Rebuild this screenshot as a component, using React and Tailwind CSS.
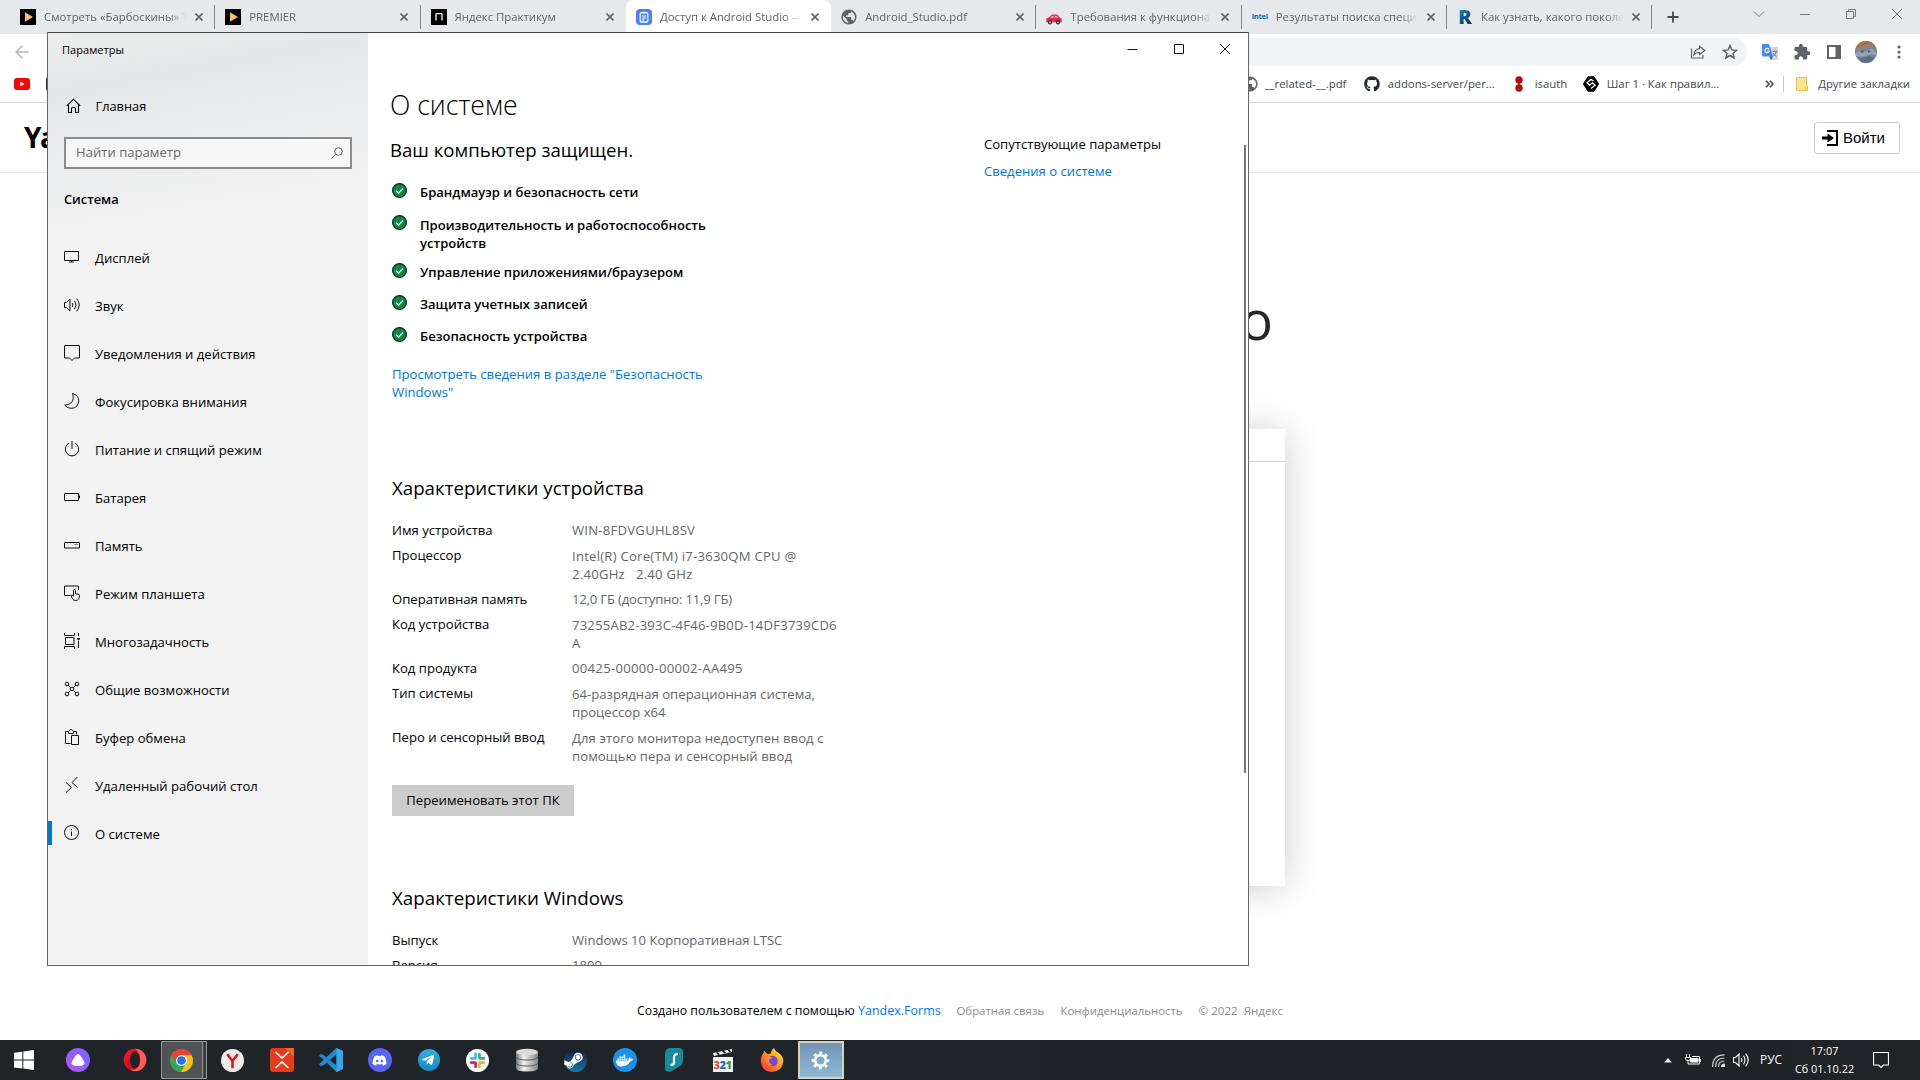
import React from "react";
import { FaDiscord, FaDocker, FaGithub, FaSteamSymbol, FaTelegramPlane } from "react-icons/fa";
import { MdPublic, MdExtension } from "react-icons/md";

/* ---------- Tab favicons ---------- */
const PlayFav = () => (
  <svg viewBox="0 0 16 16" className="size-4 shrink-0">
    <rect width="16" height="16" fill="#000" />
    <path d="M5 3.2 13 8 5 12.8Z" fill="#fbc056" />
  </svg>
);
const PracticumFav = () => (
  <svg viewBox="0 0 16 16" className="size-4 shrink-0">
    <rect width="16" height="16" fill="#000" />
    <path d="M5 11.5V5.5Q5 4.7 5.8 4.7H10.3Q11 4.7 11 5.5V11.5" fill="none" stroke="#fff" strokeWidth="1.3" />
  </svg>
);
const FormFav = () => (
  <svg viewBox="0 0 16 16" className="size-4 shrink-0">
    <rect width="16" height="16" rx="4" fill="#4c7dfb" />
    <rect x="4.2" y="3.8" width="7.6" height="9.2" rx="1" fill="none" stroke="#fff" strokeWidth="1.3" />
    <path d="M6 3.3h4M6 7h4M6 9h4M6 11h2.6" stroke="#fff" strokeWidth="1" />
  </svg>
);
const CarFav = () => (
  <svg viewBox="0 0 16 16" className="size-4 shrink-0">
    <path d="M.3 13.3V10.2Q.5 9 2.800 8.600L5 6.200Q5.600 5.600 6.500 5.600H10.600Q11.600 5.600 12.200 6.400L13.600 8.600Q15.700 9 15.700 10.600V13.300Z" fill="#dd2e44" />
    <path d="M4.200 8.800 5.800 7Q6 6.800 6.400 6.800H7.800V8.800ZM8.800 6.800H10.400Q11 6.800 11.300 7.300L12.100 8.800H8.800Z" fill="#f3a0ab" />
    <circle cx="4" cy="13.400" r="2.100" fill="#292f33" />
    <circle cx="12" cy="13.400" r="2.100" fill="#292f33" />
    <circle cx="4" cy="13.400" r=".9" fill="#ccd6dd" />
    <circle cx="12" cy="13.400" r=".9" fill="#ccd6dd" />
  </svg>
);
const IntelFav = () => (
  <span className="flex w-4 shrink-0 justify-center text-[7.5px] font-bold tracking-[-0.2px] text-[#0068b5]">intel</span>
);
const RFav = () => (
  <span className="flex w-4 shrink-0 justify-center bg-gradient-to-br from-[#0b93c4] to-[#0d1f50] bg-clip-text text-[20px] leading-4 font-extrabold text-transparent">R</span>
);
const GlobeFav = () => <MdPublic className="size-[18px] shrink-0 -mx-px text-[#5f6368]" />;

const TABS = [
  { title: "Смотреть «Барбоскины» Т", Fav: PlayFav, sep: true },
  { title: "PREMIER", Fav: PlayFav, sep: true },
  { title: "Яндекс Практикум", Fav: PracticumFav },
  { title: "Доступ к Android Studio —", Fav: FormFav, active: true },
  { title: "Android_Studio.pdf", Fav: GlobeFav, sep: true },
  { title: "Требования к функциона", Fav: CarFav, sep: true },
  { title: "Результаты поиска специ", Fav: IntelFav, sep: true },
  { title: "Как узнать, какого поколе", Fav: RFav, sep: true },
];

function Tab({ title, Fav, active, sep }) {
  return (
    <div className={"flex h-[34px] w-[205.3px] items-center pr-[10px] pl-[10px] " + (active ? "rounded-t-lg bg-white" : "")}>
      <Fav />
      <div className="ml-2 w-[145px] overflow-hidden whitespace-nowrap [mask-image:linear-gradient(to_right,#000_86%,transparent_98%)]">{title}</div>
      <svg viewBox="0 0 8 8" className="ml-[6px] size-2 shrink-0">
        <path d="M.5.5l7 7M7.5.5l-7 7" stroke="#5f6368" strokeWidth="1.6" />
      </svg>
      <div className={"ml-auto -mr-[10px] h-6 w-px " + (sep ? "bg-[#85888d]" : "")} />
    </div>
  );
}

function BrowserChrome() {
  return (
    <div className="text-[11.35px] text-[#5f6368]">
      <div className="flex h-[34px] items-center bg-[#e7e8ec] pl-[10px]">
        {TABS.map((t) => (
          <Tab key={t.title} {...t} />
        ))}
        <svg viewBox="0 0 12 12" className="ml-[15px] size-3">
          <path d="M6 0.5v11M.5 6h11" stroke="#45484c" strokeWidth="1.8" />
        </svg>
        <svg viewBox="0 0 150 12" className="mr-[17px] mb-[6px] ml-auto h-3 w-[150px]" fill="none" stroke="#77797d">
          <path d="M1 3.5 6 8.500 11 3.500M47 6.500h10M93.500 3.500h7v7h-7zM95.500 3.500v-2h7v7h-2M139 1l10 10M149 1l-10 10" />
        </svg>
      </div>
      <div className="flex h-9 items-center pr-[19px] pl-[15px]">
        <svg viewBox="0 0 14 14" className="size-[14px]" fill="none" stroke="#babcbe" strokeWidth="1.7">
          <path d="M14 7H1.500M7.500 .7 1.200 7l6.300 6.300" />
        </svg>
        <div className="ml-24 flex h-7 flex-1 items-center justify-end gap-[16px] rounded-full bg-[#f1f3f4] pr-[9px]">
          <svg viewBox="0 0 16 16" className="size-4" fill="none" stroke="#5f6368" strokeWidth="1.200">
            <path d="M1.500 4.500v9.500h11.500v-3M9.500 2.200 14.800 6.500 9.500 10.500V8.300Q6 8.200 3.800 11 4.500 5.200 9.500 4.700Z" />
          </svg>
          <svg viewBox="0 0 16 16" className="size-4" fill="none" stroke="#5f6368" strokeWidth="1.500">
            <path d="M8 1.600 9.900 5.900 14.500 6.300 11 9.400 12.100 14 8 11.500 3.900 14 5 9.400 1.500 6.300 6.100 5.900Z" />
          </svg>
        </div>
        <svg viewBox="0 0 16 16" className="ml-[15px] size-4">
          <path d="M5 3h11v13H9Z" fill="#d3d5d8" />
          <path d="M0 1q0-1 1-1h6l4 12.500H1q-1 0-1-1Z" fill="#4688f4" />
          <path d="M7 12.500h4L9 16Z" fill="#2a56c6" />
          <path d="M7 5.200A2.200 2.200 0 1 0 7.300 7H5.300" fill="none" stroke="#fff" strokeWidth="1.100" />
          <path d="M10.500 7.500h4.500M12.700 6.500v1M14.300 7.600q-.8 3-3 4.600M11.200 9q1 2.400 3.300 3.600" fill="none" stroke="#607d8b" strokeWidth=".9" />
        </svg>
        <MdExtension className="ml-[15px] size-[18px] text-[#5f6368]" />
        <svg viewBox="0 0 14 14" className="ml-[16px] size-[14px]">
          <path d="M1 1h12v12H1z" fill="#fff" stroke="#5f6368" strokeWidth="2" />
          <path d="M8.500 1H13v12H8.500z" fill="#5f6368" />
        </svg>
        <svg viewBox="0 0 22 22" className="ml-[14px] size-[22px] rounded-full">
          <rect width="22" height="22" fill="#7787a0" />
          <path d="M0 0h22v8Q17 3 12 4 5 5 0 9Z" fill="#a9713f" />
          <path d="M5 5 8 4l3 2 5-3 3 3-2 4-8 1-5-2Z" fill="#85878f" />
          <path d="M1 12q4-4 7-2t6-1 8 4v2q-6-3-9-1t-12 1Z" fill="#97a3b5" />
          <path d="M5 10q2-2 4 0l-1 2H6zM13 9q2 0 3 2l-3 1z" fill="#59637a" />
          <path d="M3 16q4 2 8 0t9 1l-6 5H7Z" fill="#5d6a83" />
        </svg>
        <svg viewBox="0 0 4 16" className="ml-[20px] h-4 w-1" fill="#5f6368">
          <circle cx="2" cy="3" r="1.600" /><circle cx="2" cy="8" r="1.600" /><circle cx="2" cy="13" r="1.600" />
        </svg>
      </div>
      <div className="flex h-[33px] items-center border-b border-[#d5d7da] pr-[10px] pb-[4px] pl-[14px] whitespace-nowrap text-[#45484c]">
        <svg viewBox="0 0 16 12" className="h-3 w-4">
          <rect width="16" height="12" rx="3" fill="#f00" />
          <path d="M6.300 3.500 10.500 6 6.300 8.500Z" fill="#fff" />
        </svg>
        <div className="ml-4 size-4 rounded bg-[#2b303b]" />
        <div className="ml-auto flex items-center">
          <MdPublic className="size-[18px] text-[#5f6368]" />
          <span className="ml-[6px] w-[99px]">__related-__.pdf</span>
          <FaGithub className="size-4 text-[#24292f]" />
          <span className="ml-2 w-[127px]">addons-server/per...</span>
          <svg viewBox="0 0 8 16" className="h-4 w-2" fill="#b80c0c">
            <circle cx="4" cy="4" r="3.700" /><circle cx="4" cy="12" r="3.700" /><path d="M3.300 4h1.400v8H3.300z" />
          </svg>
          <span className="ml-3 w-12">isauth</span>
          <svg viewBox="0 0 16 16" className="size-4">
            <path d="M5 .8h6L15.600 8 11 15.200H5L.4 8Z" fill="#000" stroke="#000" strokeLinejoin="round" />
            <path d="M8 12.600 12 9.200 9.500 6.800 6.500 9.200 4 6.800 8 3.400 10.500 5" fill="none" stroke="#fff" strokeWidth="1.300" />
          </svg>
          <span className="ml-2 w-[158.500px]">Шаг 1 · Как правил...</span>
          <svg viewBox="0 0 9 8" className="h-2 w-[9px]" fill="none" stroke="#45484c" strokeWidth="1.600">
            <path d="M1 .7 4 4 1 7.300M5 .7 8 4 5 7.300" />
          </svg>
          <div className="ml-[9px] h-4 w-px bg-[#c5c7ca]" />
          <svg viewBox="0 0 12 14" className="ml-3 h-[14px] w-3">
            <path d="M.5.5h10V9.500h1v4H.5z" fill="#ffe592" stroke="#eac343" />
            <path d="M9.500 13.500v-3l1-1" fill="none" stroke="#eac343" />
          </svg>
          <span className="ml-[10px]">Другие закладки</span>
        </div>
      </div>
    </div>
  );
}

function FormPage() {
  return (
    <div className="flex h-[937px] flex-col">
      <div className="flex h-[70px] items-center justify-between border-b border-[#ebebeb] pr-5 pl-6">
        <span className="pb-[2px] text-[28px] font-bold tracking-[-1.500px] text-black">Ya</span>
        <div className="flex h-8 w-[86px] items-center rounded-[3px] border border-[#ccc] pl-[7px]">
          <svg viewBox="0 0 16 16" className="size-4">
            <path d="M5 1h10v14H5" fill="none" stroke="#000" strokeWidth="2" />
            <path d="M0 6.500h5.500V3.500L12 8l-6.500 4.500V9.500H0Z" fill="#000" />
          </svg>
          <span className="ml-[5px] pt-px font-['Liberation_Sans',Arial,sans-serif] text-[15px] text-black">Войти</span>
        </div>
      </div>
      <div className="flex h-[256px] w-[1273px] justify-end pt-[111px] text-[54px] leading-[70px] text-[#262626]">о</div>
      <div className="ml-[635px] h-[457px] w-[650px] bg-white shadow-[0_2px_36px_rgba(0,0,0,0.2)]">
        <div className="h-[33px] border-b border-[#d0d0d0]" />
      </div>
      <div className="mt-[115px] ml-[637px] flex items-baseline text-[11.4px] leading-5 whitespace-nowrap text-[#8c8c8c]">
        <span className="w-[221px] text-[12.300px] text-black">Создано пользователем с помощью</span>
        <span className="w-[98.500px] text-[12.500px] text-[#07f]">Yandex.Forms</span>
        <span className="w-[104px]">Обратная связь</span>
        <span className="w-[138px]">Конфиденциальность</span>
        <span className="text-[11.600px] whitespace-pre">© 2022  Яндекс</span>
      </div>
    </div>
  );
}

/* ---------- Settings window ---------- */
const NAV = [
  ["Дисплей", <path d="M.5 2.500h14v9h-14zM7.500 11.500v1.500M5 13h5" />],
  ["Звук", <path d="M.5 5.500h2l3.500-3.500v12L2.500 10.500h-2zM8.200 6q1.400 2 0 4M10.500 3.800q3 4.200 0 8.400M12.700 1.600q5 6.400 0 12.800" />],
  ["Уведомления и действия", <path d="M.5.5h15v12.500h-5L8 15.500 5.500 13h-5z" />],
  ["Фокусировка внимания", <path d="M8.500.5Q15 2.500 14.800 8 14.200 14.800 7.500 15.400 3 15.300.7 12.200 8.500 11.500 9.200 5.500 9.500 2.800 8.500.5Z" />],
  ["Питание и спящий режим", <path d="M5 2.200A6.700 6.700 0 1 0 11 2.200M8 0v8" />],
  ["Батарея", <path d="M.5 4.500h14v7h-14zM15.500 6.500v3" />],
  ["Память", <path d="M1 5.500h14q.5 0 .5.500v5h-15V6q0-.5.500-.5zM10.500 7.500h1M12.500 7.500h1" />],
  ["Режим планшета", <path d="M6.500 10.500h-6v-9.500h14v4M9.500 11V5.500q0-1 1-1t1 1V9h2.500q1.500.3 1.500 1.800 0 4.700-3.800 4.700-2.200 0-3.500-2L7 10.500q1-1 2.500.5" />],
  ["Многозадачность", <path d="M.5 0v2.500h10V0M.5 16v-2.500h10V16M1.500 4.500h8.500v7H1.500zM14.500 0v3M14.500 7.500V15M13 5.500h3M13.500 6.500h2" />],
  ["Общие возможности", <path d="M4.300 4.300 6.500 6.500M9.500 6.500l2.200-2.200M4.300 11.700 6.500 9.500M9.500 9.500l2.200 2.200M3 1.200a1.800 1.800 0 1 1 0 3.600 1.800 1.800 0 0 1 0-3.600M13 1.200a1.800 1.800 0 1 1 0 3.600 1.800 1.800 0 0 1 0-3.600M3 11.200a1.800 1.800 0 1 1 0 3.600 1.800 1.800 0 0 1 0-3.600M13 11.200a1.800 1.800 0 1 1 0 3.600 1.800 1.800 0 0 1 0-3.600M8 6.200a1.800 1.800 0 1 1 0 3.600 1.800 1.800 0 0 1 0-3.600" />],
  ["Буфер обмена", <path d="M6.500 14.500h-5v-12h3v2h5v-2h3v3M4.500 2.500q0-1 1-1 .3-1 1.500-1t1.500 1q1 0 1 1M7.500 6.500h7v9h-7z" />],
  ["Удаленный рабочий стол", <path d="M2 5.500 7.500 10.500 2 15.500M13.500 0 8 5.500 13.500 10.500" />],
  ["О системе", <path d="M7.500.5a7 7 0 1 1 0 14 7 7 0 0 1 0-14M7.500 6.500v4.500M7.500 4v1.200" />],
];

function Sidebar() {
  return (
    <div className="flex w-[320px] shrink-0 flex-col bg-[#f2f2f2] bg-[linear-gradient(170deg,#ebecec_0px,#e6e7e8_60px,#ecedee_130px,#f2f2f2_220px)]">
      <div className="pt-2 pl-[14px] text-[11.100px] leading-[18px]">Параметры</div>
      <div className="mt-[38px] flex h-[18px] items-center pl-[18px]">
        <svg viewBox="0 0 16 16" className="size-4" fill="none" stroke="#000" strokeWidth="1.100">
          <path d="M.8 7.800 7.500 1.200 14.200 7.800M2.500 6.500v8h3v-4q0-1 1-1h2q1 0 1 1v4h3v-8" />
        </svg>
        <span className="ml-[13.500px] pt-[2px] text-[12.800px]">Главная</span>
      </div>
      <div className="mt-[22px] ml-4 flex h-8 w-72 items-center justify-between border-2 border-[#8c8c8c] bg-[#f6f6f6] pr-[7px] pl-[10px] text-[#6a6a6a]">
        <span className="pb-px">Найти параметр</span>
        <svg viewBox="0 0 12 12" className="size-3" fill="none" stroke="#666" strokeWidth="1">
          <circle cx="7.500" cy="4.500" r="3.800" /><path d="M4.800 7.200.5 11.500" />
        </svg>
      </div>
      <div className="mt-[21px] ml-4 text-[12.800px] leading-[18px] font-semibold">Система</div>
      <div className="mt-[25px] flex flex-col">
        {NAV.map(([label, icon], i) => (
          <div key={label} className="flex h-12 items-center">
            <div className={"h-6 w-1 " + (i === 12 ? "bg-[#0078d7]" : "")} />
            <svg viewBox="0 0 16 16" className="ml-3 size-4" fill="none" stroke="#111" strokeWidth="1">
              {icon}
            </svg>
            <span className="ml-[15px] pt-px leading-[18px]">{label}</span>
          </div>
        ))}
      </div>
    </div>
  );
}

const CHECKS = [
  ["Брандмауэр и безопасность сети"],
  ["Производительность и работоспособность", "устройств"],
  ["Управление приложениями/браузером"],
  ["Защита учетных записей"],
  ["Безопасность устройства"],
];
const SPECS = [
  ["Имя устройства", ["WIN-8FDVGUHL8SV"], "tracking-[0.25px]"],
  ["Процессор", ["Intel(R) Core(TM) i7-3630QM CPU @", "2.40GHz   2.40 GHz"], "tracking-[0.25px]"],
  ["Оперативная память", ["12,0 ГБ (доступно: 11,9 ГБ)"], "tracking-[-0.18px]"],
  ["Код устройства", ["73255AB2-393C-4F46-9B0D-14DF3739CD6", "A"], "tracking-[0.2px]"],
  ["Код продукта", ["00425-00000-00002-AA495"], "tracking-[0.3px]"],
  ["Тип системы", ["64-разрядная операционная система,", "процессор x64"], "tracking-[0.03px]"],
  ["Перо и сенсорный ввод", ["Для этого монитора недоступен ввод с", "помощью пера и сенсорный ввод"], "tracking-[0.08px]"],
];
const WINDOWS = [
  ["Выпуск", ["Windows 10 Корпоративная LTSC"], ""],
  ["Версия", ["1809"], ""],
];

function Rows({ rows }) {
  return (
    <div className="mt-5 leading-[18px]">
      {rows.map(([k, v, tracking]) => (
        <div key={k} className={"flex " + (v.length > 1 ? "h-11" : "h-[25px]")}>
          <div className="w-[180px] shrink-0">{k}</div>
          <div className={"whitespace-pre text-[#666] " + (v.length > 1 ? "pt-px " : "") + tracking}>
            {v.map((line) => (
              <div key={line}>{line}</div>
            ))}
          </div>
        </div>
      ))}
    </div>
  );
}

function SettingsWindow() {
  return (
    <div className="absolute top-8 left-[47px] flex h-[934px] w-[1202px] overflow-hidden border border-[#666] border-t-[#444] bg-white text-[13.100px] text-black">
      <Sidebar />
      <div className="flex flex-1 flex-col">
        <div className="flex h-8 shrink-0 items-center justify-end pr-[17px]">
          <svg viewBox="0 0 104 12" className="h-3 w-[104px]" fill="none" stroke="#111">
            <path d="M.5 6.500h10M47.500 1.500h9v9h-9zM93 1l10 10M103 1 93 11" />
          </svg>
        </div>
        <div className="flex min-h-0 flex-1">
          <div className="flex w-[593px] flex-col pt-[22px] pl-6">
            <div className="-ml-[2px] text-[26.600px] leading-9 font-light">О системе</div>
            <div className="mt-[14px] -ml-[2px] text-[18.600px] leading-[26px]">Ваш компьютер защищен.</div>
            <div className="mt-5 text-[13.050px] leading-[18px] font-semibold">
              {CHECKS.map((lines) => (
                <div key={lines[0]} className={"flex gap-[13px] " + (lines.length > 1 ? "h-12" : "h-8")}>
                  <svg viewBox="0 0 15 15" className="size-[15px] shrink-0">
                    <circle cx="7.500" cy="7.500" r="6.900" fill="#10893e" stroke="#0b2b18" strokeWidth="1.200" />
                    <path d="M4 7.700 6.500 10.200 11 5.500" fill="none" stroke="#fff" strokeWidth="1.200" />
                  </svg>
                  <div className={lines.length > 1 ? "pt-px" : ""}>
                    {lines.map((l) => (
                      <div key={l}>{l}</div>
                    ))}
                  </div>
                </div>
              ))}
            </div>
            <div className="mt-[6px] w-[330px] text-[13.150px] leading-[18px] text-[#0078d7]">
              <div>Просмотреть сведения в разделе "Безопасность</div>
              <div>Windows"</div>
            </div>
            <div className="mt-[74px] text-[18.700px] leading-[26px]">Характеристики устройства</div>
            <Rows rows={SPECS} />
            <div className="mt-[13px] flex h-[31px] w-[182px] shrink-0 items-center justify-center bg-[#ccc] pt-px">Переименовать этот ПК</div>
            <div className="mt-[69px] text-[18.750px] leading-[26px]">Характеристики Windows</div>
            <Rows rows={WINDOWS} />
          </div>
          <div className="w-[283px] pt-[70px] pl-[23px] leading-[18px]">
            <div>Сопутствующие параметры</div>
            <div className="mt-[9px] text-[#0078d7]">Сведения о системе</div>
          </div>
          <div className="mt-20 h-[628px] w-[2px] bg-[#767676]" />
        </div>
      </div>
    </div>
  );
}

/* ---------- Taskbar ---------- */
const Slot = ({ children }) => <div className="flex w-[49px] shrink-0 items-center justify-center">{children}</div>;

function Taskbar() {
  return (
    <div className="flex h-10 items-center bg-[linear-gradient(90deg,#202427,#1e2429_50%,#1d222b_70%,#1f2427)] text-white">
      <svg viewBox="0 0 20 20" className="ml-[14px] size-5" fill="#fff">
        <path d="M0 2.800 8.300 1.700V9.600H0ZM9.300 1.500 20 0V9.600H9.300ZM0 10.600H8.300V18.500L0 17.400ZM9.300 10.600H20V20L9.300 18.600Z" />
      </svg>
      <svg viewBox="0 0 24 24" className="ml-8 size-6">
        <defs>
          <linearGradient id="alice" x1="0" y1="1" x2="1" y2="0"><stop offset="0" stopColor="#c24dff" /><stop offset="1" stopColor="#6a6bff" /></linearGradient>
          <linearGradient id="opera" x1="0" y1="0" x2="1" y2="1"><stop offset="0" stopColor="#ff1b2d" /><stop offset="1" stopColor="#a70014" /></linearGradient>
        </defs>
        <circle cx="12" cy="12" r="12" fill="url(#alice)" />
        <path d="M12 6c2 0 6.500 7.300 6.500 9.300S15.500 18 12 18s-6.500-.7-6.500-2.700S10 6 12 6Z" fill="#fff" />
      </svg>
      <svg viewBox="0 0 24 24" className="ml-[33px] size-6">
        <ellipse cx="12" cy="12" rx="11.300" ry="11.200" fill="url(#opera)" />
        <path d="M12 .8a11.300 11.200 0 0 1 0 22.400q-3 0-5-2 5 1.500 8-2t2-10.500Q16 3.500 12 .8Z" fill="#ff5b5b" />
        <ellipse cx="11.800" cy="12" rx="4.900" ry="8.600" fill="#1f2428" />
      </svg>
      <div className="ml-[14px] flex h-[38px] w-[42px] items-center justify-center border border-[#94979a] bg-[#505457]">
        <svg viewBox="0 0 24 24" className="size-[23px] -ml-px">
          <circle cx="12" cy="12" r="12" fill="#34a853" />
          <path d="M12 0a12 12 0 0 1 10.600 6.500H12L7 14.500 1.600 6A12 12 0 0 1 12 0Z" fill="#ea4335" />
          <path d="M22.600 6.500A12 12 0 0 1 11.500 24L17 14.500 12 6.500Z" fill="#fbc116" />
          <circle cx="12" cy="12" r="5.700" fill="#fff" /><circle cx="12" cy="12" r="4.500" fill="#1a73e8" />
        </svg>
      </div>
      <div className="h-[38px] w-1 border border-l-0 border-[#94979a] bg-[#3c4043]" />
      <div className="ml-px flex">
        <Slot>
          <svg viewBox="0 0 24 24" className="size-[23px]"><circle cx="12" cy="12" r="12" fill="#ececec" /><path d="M6.500 5.500 12 12.500 17.500 5.500M12 12v8" stroke="#e01018" strokeWidth="2.600" fill="none" /></svg>
        </Slot>
        <Slot>
          <svg viewBox="0 0 24 24" className="size-6"><rect width="24" height="24" rx="3" fill="#ea3a1c" /><path d="M24 0v9L15 0Z" fill="#f0632e" /><path d="M5.500 4 12 10.200 18.500 4M5.500 20 12 13.800 18.500 20" stroke="#fff" strokeWidth="1.600" fill="none" /></svg>
        </Slot>
        <Slot>
          <svg viewBox="0 0 24 24" className="size-6"><path d="M17.500 0 24 3v18l-6.500 3L2.200 9.500 0 7.800l1.700-1.700 2.500.6L17.500 17.500V6.500L4.200 17.500l-2.500.5L0 16.200 17 .3Z" fill="#1f8ad2" /><path d="M17.500 0 24 3v18l-6.500 3Z" fill="#35a7ee" /></svg>
        </Slot>
        <Slot>
          <div className="flex size-6 items-center justify-center rounded-full bg-[#5865f2]"><FaDiscord className="size-[15px]" /></div>
        </Slot>
        <Slot>
          <div className="flex size-[22px] items-center justify-center rounded-full bg-gradient-to-b from-[#35ace0] to-[#1788c5]"><FaTelegramPlane className="-ml-0.5 size-[14px]" /></div>
        </Slot>
        <Slot>
          <svg viewBox="0 0 24 24" className="size-[23px]"><circle cx="12" cy="12" r="12" fill="#fff" />
            <g fill="none" strokeWidth="2.800" strokeLinecap="round"><path d="M10 5v4.500" stroke="#36c5f0" /><path d="M5.500 9.800h4" stroke="#36c5f0" /><path d="M14 5.300v4M14.500 9.800h4.300" stroke="#2eb67d" /><path d="M14.300 14.200h4.300M14 14.500v4.300" stroke="#ecb22e" /><path d="M5.300 14.200h4M10 14.500v4.300" stroke="#e01e5a" /></g>
          </svg>
        </Slot>
        <Slot>
          <svg viewBox="0 0 24 24" className="size-6">
            <defs><linearGradient id="db" x1="0" x2="1"><stop offset="0" stopColor="#777" /><stop offset=".35" stopColor="#f2f2f2" /><stop offset="1" stopColor="#858585" /></linearGradient></defs>
            <path d="M1 4v16q0 3.500 11 3.500T23 20V4Z" fill="url(#db)" /><ellipse cx="12" cy="4" rx="11" ry="3.300" fill="#d9d9d9" />
            <path d="M1 8.800q1 3.200 11 3.200t11-3.200M1 14.800q1 3.200 11 3.200t11-3.200" stroke="#5a5a5a" fill="none" />
          </svg>
        </Slot>
        <Slot>
          <div className="flex size-[23px] items-center justify-center rounded-full bg-gradient-to-b from-[#111d3c] to-[#0f78ab]"><FaSteamSymbol className="-ml-1 size-[21px]" /></div>
        </Slot>
        <Slot>
          <div className="flex size-6 items-center justify-center rounded-full bg-[#1d90ee]"><FaDocker className="size-[17px]" /></div>
        </Slot>
        <Slot>
          <svg viewBox="0 0 20 24" className="h-6 w-5"><path d="M6 0h9q4 0 4 4v9q0 3-3 5L7 23.500q-6 1-6-3V6Q1 0 6 0Z" fill="#178a9e" /><path d="M14 6q-4 0-4 3.500v5Q10 17 6.500 17" fill="none" stroke="#fff" strokeWidth="2.200" /></svg>
        </Slot>
        <Slot>
          <div className="flex w-5 flex-col">
            <svg viewBox="0 0 20 8" className="h-2 w-5"><path d="M0 4 19 0v3L1 7Z" fill="#eee" /><path d="M3 3.400 5 3 7 5.500l-2 .5ZM9 2l2-.4L13 4l-2 .5ZM14.500 1l2-.4L18 3l-1.500.4Z" fill="#111" /></svg>
            <div className="flex h-[15px] items-center justify-center bg-[#f4f4f4] text-[11px] leading-none font-extrabold tracking-[-0.500px]"><span className="text-[#d8552a]">3</span><span className="text-[#2b6bb5]">2</span><span className="text-[#2d9a48]">1</span></div>
          </div>
        </Slot>
        <Slot>
          <svg viewBox="0 0 24 24" className="size-6">
            <defs><linearGradient id="fx" x1="1" y1="0" x2="0" y2="1"><stop offset="0" stopColor="#fff13a" /><stop offset=".45" stopColor="#ff9a1f" /><stop offset="1" stopColor="#f0254f" /></linearGradient></defs>
            <path d="M14 0q1 3 4.500 5Q23.500 8 23.300 13.500 22 23.500 12 24 1.500 23.500.8 13.500.8 8 3.500 5L4 2.500 7.500 6 11 5.500Q11 2 14 0Z" fill="url(#fx)" />
            <circle cx="12.500" cy="13" r="5.200" fill="#7542e5" /><path d="M5 9.500q4-1.500 8 .5-4 .5-4 3t4 3.500Q8 19 6 15.500Z" fill="#ff8a16" />
          </svg>
        </Slot>
      </div>
      <div className="ml-[1.500px] flex h-[38px] w-[46px] items-center justify-center border-2 border-[#d9cfbe] bg-[linear-gradient(#7195b4,#8fb8d4)]">
        <svg viewBox="0 0 20 20" className="size-[19px]" fill="none" stroke="#fff">
          <circle cx="10" cy="10" r="5.600" strokeWidth="2.600" />
          <circle cx="10" cy="10" r="7.900" strokeWidth="3" strokeDasharray="3 3.205" strokeDashoffset="1.500" />
        </svg>
      </div>
      <div className="ml-auto flex items-center pr-[31px]">
        <svg viewBox="0 0 8 5" className="h-[5px] w-2"><path d="M0 4.500 4 0l4 4.500Z" fill="#e8eaff" /></svg>
        <svg viewBox="0 0 16 12" className="ml-[13px] h-3 w-4" fill="none" stroke="#fff"><path d="M1.500 0v3M4.500 0v3M.5 3.500h5V5Q5.500 6.500 3 6.500T.5 5ZM3 6.500v3.500h11.500v-7.500H7M15.500 5v3" /><path d="M5.500 8V4.500H13V8Z" fill="#fff" /></svg>
        <svg viewBox="0 0 13 13" className="ml-[11px] size-[13px]" fill="none" stroke="#c9ccce" strokeWidth="1.200"><path d="M.6 13Q.6.8 12.500.8M3.600 13Q3.600 4 12.500 4M6.500 13Q6.500 7 12.500 7" /><path d="M9.400 13q0-3 3-3v3Z" fill="#fff" /></svg>
        <svg viewBox="0 0 16 16" className="ml-2 size-4" fill="none" stroke="#fff" strokeWidth="1.100">{NAV[1][1]}</svg>
        <span className="ml-[11px] w-[23px] text-[11.900px]">РУС</span>
        <div className="ml-[10px] flex w-[63px] flex-col items-center text-[10.900px] leading-[18px] whitespace-nowrap">
          <span>17:07</span>
          <span>Сб 01.10.22</span>
        </div>
        <svg viewBox="0 0 16 16" className="ml-[17px] size-4" fill="none" stroke="#fff" strokeWidth="1.200">{NAV[2][1]}</svg>
      </div>
    </div>
  );
}

export default function App() {
  return (
    <div className="relative h-[1080px] w-[1920px] overflow-hidden bg-white font-['Open_Sans','Noto_Sans',sans-serif]">
      <BrowserChrome />
      <FormPage />
      <SettingsWindow />
      <Taskbar />
    </div>
  );
}
